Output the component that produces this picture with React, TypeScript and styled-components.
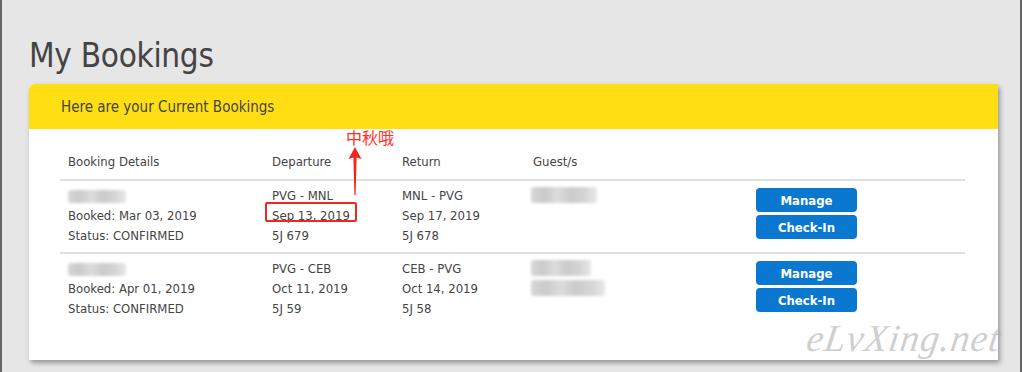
import React from "react";
import styled, { createGlobalStyle } from "styled-components";

const FONT = `"DejaVu Sans Condensed", "Liberation Sans", "Noto Sans CJK SC", sans-serif`;

type Leg = { route: string; date: string; flight: string };

type Booking = {
  nameWidth: number;
  booked: string;
  status: string;
  departure: Leg;
  ret: Leg;
  guests: number[];
};

const bookings: Booking[] = [
  {
    nameWidth: 58,
    booked: "Mar 03, 2019",
    status: "CONFIRMED",
    departure: { route: "PVG - MNL", date: "Sep 13, 2019", flight: "5J 679" },
    ret: { route: "MNL - PVG", date: "Sep 17, 2019", flight: "5J 678" },
    guests: [66],
  },
  {
    nameWidth: 58,
    booked: "Apr 01, 2019",
    status: "CONFIRMED",
    departure: { route: "PVG - CEB", date: "Oct 11, 2019", flight: "5J 59" },
    ret: { route: "CEB - PVG", date: "Oct 14, 2019", flight: "5J 58" },
    guests: [60, 74],
  },
];

const GlobalStyle = createGlobalStyle`
  html, body {
    margin: 0;
    padding: 0;
    background: #e6e6e6;
  }
  body {
    font-family: ${FONT};
    color: #444;
  }
`;

export default function App() {
  return (
    <>
      <GlobalStyle />
      <Page>
        <Title>My Bookings</Title>
        <Card>
          <CardHeader>Here are your Current Bookings</CardHeader>
          <CardBody>
            <Table>
              <HeadRow>
                <HeadCell>Booking Details</HeadCell>
                <HeadCell>Departure</HeadCell>
                <HeadCell>Return</HeadCell>
                <HeadCell>Guest/s</HeadCell>
                <HeadCell />
              </HeadRow>
              {bookings.map((b, i) => (
                <Row key={i} last={i === bookings.length - 1}>
                  <Cell>
                    <Line>
                      <Blur style={{ width: b.nameWidth }} />
                    </Line>
                    <Line>Booked: {b.booked}</Line>
                    <Line>Status: {b.status}</Line>
                  </Cell>
                  <Cell>
                    <Line>{b.departure.route}</Line>
                    <Line>{b.departure.date}</Line>
                    <Line>{b.departure.flight}</Line>
                  </Cell>
                  <Cell>
                    <Line>{b.ret.route}</Line>
                    <Line>{b.ret.date}</Line>
                    <Line>{b.ret.flight}</Line>
                  </Cell>
                  <Cell>
                    <GuestList>
                      {b.guests.map((w, j) => (
                        <Blur key={j} tall style={{ width: w }} />
                      ))}
                    </GuestList>
                  </Cell>
                  <ActionCell>
                    <ActionButton>Manage</ActionButton>
                    <ActionButton>Check-In</ActionButton>
                  </ActionCell>
                </Row>
              ))}
            </Table>
          </CardBody>

          <Note>中秋哦</Note>
          <Arrow width="14" height="48" viewBox="0 0 14 48">
            <polygon points="7,0 13.5,12 8.6,10.5 7.6,48 6.4,48 5.4,10.5 0.5,12" fill="#f2261c" />
          </Arrow>
          <Highlight />
          <Watermark>eLvXing.net</Watermark>
        </Card>
      </Page>
    </>
  );
}

const Page = styled.div`
  min-height: 372px;
  box-sizing: border-box;
  border-left: 2px solid #666;
  border-right: 2px solid #666;
  padding: 34px 0 0 27px;
`;

const Title = styled.h1`
  margin: 0 0 7px;
  font-size: 33px;
  font-weight: 400;
  line-height: 43px;
  color: #444;
  letter-spacing: -0.3px;
`;

const Card = styled.div`
  position: relative;
  width: 969px;
  background: #fff;
  border-radius: 6px 0 0 0;
  box-shadow: 2px 3px 5px rgba(0, 0, 0, 0.35);
`;

const CardHeader = styled.div`
  height: 45px;
  display: flex;
  align-items: center;
  padding-left: 32px;
  background: #ffdf14;
  border-radius: 6px 0 0 0;
  font-size: 15px;
  color: #444;
`;

const CardBody = styled.div`
  padding: 15px 33px 35px 31px;
`;

const Table = styled.div`
  display: flex;
  flex-direction: column;
`;

const Columns = styled.div`
  display: grid;
  grid-template-columns: 204px 130px 131px 1fr 217px;
`;

const HeadRow = styled(Columns)`
  padding: 8px 0 7px;
  border-bottom: 2px solid #e0e0e0;
`;

const HeadCell = styled.div`
  padding-left: 8px;
  font-size: 13px;
  line-height: 20px;
  color: #444;
`;

const Row = styled(Columns)<{ last?: boolean }>`
  padding: 5px 0 6px;
  border-bottom: ${(p) => (p.last ? "none" : "2px solid #e0e0e0")};
`;

const Cell = styled.div`
  padding-left: 8px;
  display: flex;
  flex-direction: column;
  font-size: 13px;
  color: #444;
`;

const Line = styled.div`
  height: 20px;
  line-height: 20px;
  display: flex;
  align-items: center;
`;

const GuestList = styled.div`
  display: flex;
  flex-direction: column;
  gap: 4px;
  padding-top: 1px;
  margin-left: -2px;
`;

const Blur = styled.span<{ tall?: boolean }>`
  display: inline-block;
  height: ${(p) => (p.tall ? 16 : 13)}px;
  background: linear-gradient(
    90deg,
    #d6d6d6 0%,
    #cacaca 20%,
    #dcdcdc 40%,
    #cbcbcb 60%,
    #d4d4d4 80%,
    #e8e8e8 100%
  );
  filter: blur(1.5px);
  border-radius: 3px;
`;

const ActionCell = styled.div`
  padding: 2px 0 0 8px;
  display: flex;
  flex-direction: column;
  gap: 3px;
`;

const ActionButton = styled.button`
  width: 101px;
  height: 24px;
  padding: 0;
  border: none;
  border-radius: 4px;
  background: #0a78d0;
  color: #fff;
  font-family: ${FONT};
  font-size: 13px;
  font-weight: 700;
  cursor: pointer;
`;

const Note = styled.div`
  position: absolute;
  left: 317px;
  top: 43px;
  font-family: "Noto Sans CJK SC", sans-serif;
  font-size: 16px;
  line-height: 20px;
  color: #ff2e1f;
`;

const Arrow = styled.svg`
  position: absolute;
  left: 319px;
  top: 63px;
`;

const Highlight = styled.div`
  position: absolute;
  left: 236px;
  top: 118px;
  width: 88px;
  height: 16px;
  border: 2px solid #f2261c;
  border-radius: 2px;
`;

const Watermark = styled.div`
  position: absolute;
  right: -3px;
  bottom: 0px;
  font-family: "Liberation Serif", serif;
  font-style: italic;
  font-size: 38px;
  letter-spacing: 1px;
  color: rgba(160, 160, 160, 0.5);
  transform: skewX(-8deg);
`;
